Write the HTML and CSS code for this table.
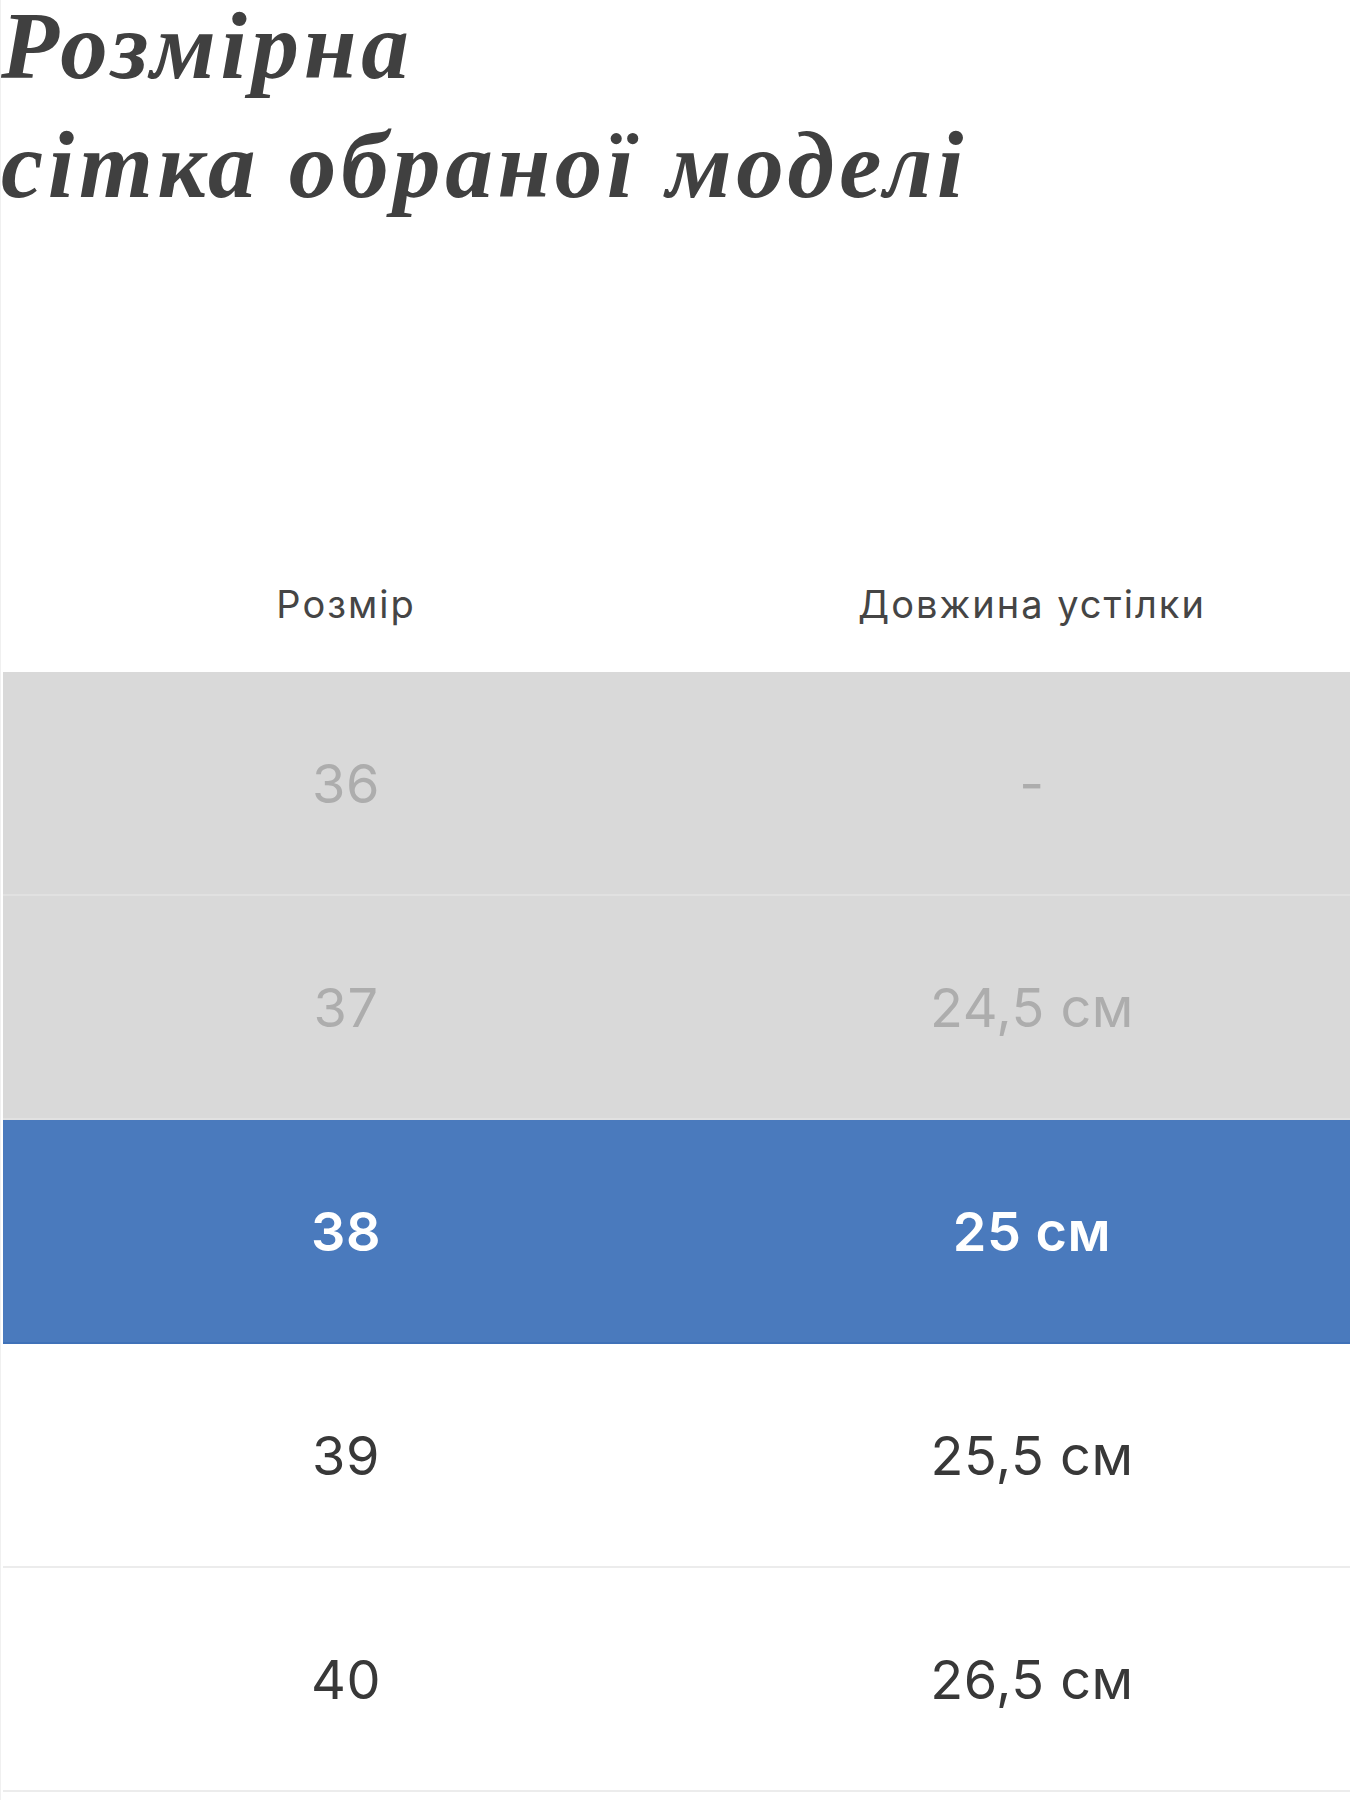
FILE: index.html
```html
<!DOCTYPE html>
<html lang="uk">
<head>
<meta charset="utf-8">
<title>Розмірна сітка</title>
<link rel="stylesheet" href="styles.css">
</head>
<body>
<main class="page">
  <h1 class="title"><span class="title-line first">Розмірна</span><span class="title-line second">сітка обраної моделі</span></h1>
  <div class="table-wrap">
    <table class="size-table">
      <thead>
        <tr><th>Розмір</th><th>Довжина устілки</th></tr>
      </thead>
      <tbody>
        <tr class="row-off"><td>36</td><td>-</td></tr>
        <tr class="row-off"><td>37</td><td>24,5 см</td></tr>
        <tr class="row-active"><td>38</td><td>25 см</td></tr>
        <tr><td>39</td><td>25,5 см</td></tr>
        <tr><td>40</td><td>26,5 см</td></tr>
      </tbody>
    </table>
  </div>
</main>
</body>
</html>
```
FILE: styles.css
```css
html, body {
  margin: 0;
  padding: 0;
  background: #ffffff;
  overflow-x: hidden;
}

.page {
  border-left: 1px solid #f0f0f0;
  min-height: 1800px;
  box-sizing: border-box;
}

.title {
  margin: 0;
  font-family: "Liberation Serif", serif;
  font-style: italic;
  font-weight: 700;
  font-size: 95px;
  color: #404040;
  letter-spacing: 4.7px;
  height: 224px;
}

.title-line {
  display: block;
  white-space: nowrap;
}

.title-line.first {
  line-height: 92px;
}

.title-line.second {
  line-height: 146px;
}

.table-wrap {
  margin-top: 312px;
  margin-left: 2px;
  width: 1372px;
  overflow: hidden;
}

.size-table {
  width: 1372px;
  border-collapse: collapse;
  table-layout: fixed;
  font-family: "Inter", "DejaVu Sans", sans-serif;
}

.size-table th {
  height: 136px;
  padding: 0;
  font-size: 38px;
  font-weight: 400;
  letter-spacing: 2px;
  color: #454545;
  text-align: center;
  vertical-align: middle;
}

.size-table td {
  height: 222px;
  padding: 0;
  font-size: 54px;
  font-weight: 400;
  letter-spacing: 0.5px;
  color: #383838;
  text-align: center;
  vertical-align: middle;
}

.size-table tbody tr {
  border-bottom: 2px solid #ececec;
}

.size-table tr.row-off {
  background: #d9d9d9;
  border-bottom-color: #e1e1e1;
}

.size-table tr.row-off td {
  color: #adadad;
}

.size-table tr.row-active {
  background: #4a7abd;
  border-bottom-color: #3f71b8;
}

.size-table tr.row-active td {
  color: #ffffff;
  font-weight: 600;
}
```
